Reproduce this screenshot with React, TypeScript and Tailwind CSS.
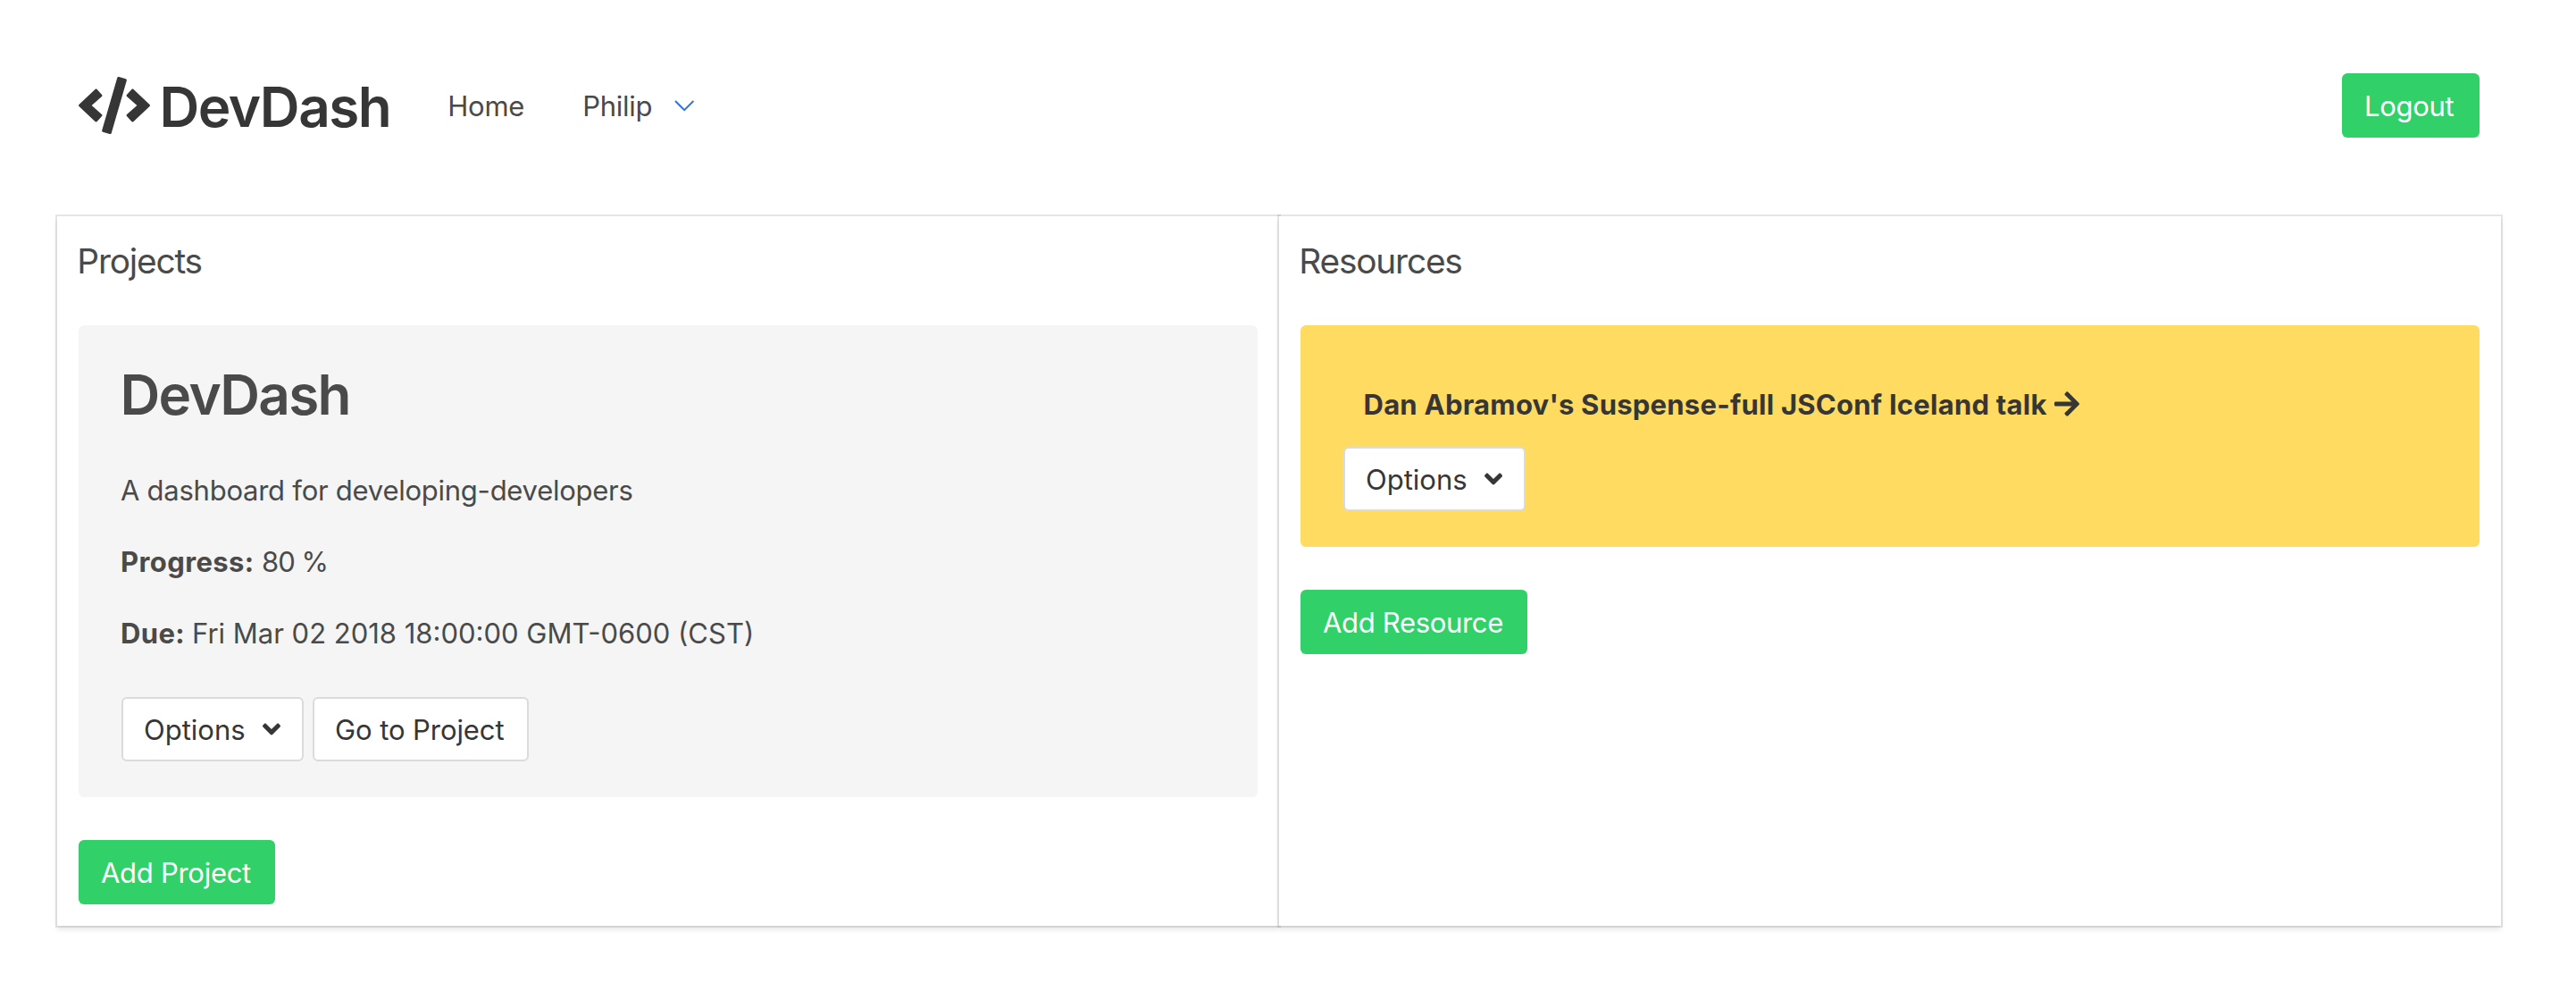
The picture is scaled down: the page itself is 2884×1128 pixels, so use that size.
import type { ReactNode } from "react";
import { FaAngleDown, FaArrowRight, FaCode } from "react-icons/fa";

const primary =
  "flex h-[72px] shrink-0 items-center rounded-md bg-[#32d068] pl-[25px] text-[31px] leading-[48px] whitespace-nowrap text-white";
const plain =
  "flex h-[72px] shrink-0 items-center rounded-md border-2 border-[#dbdbdb] bg-white pl-[23px] text-[31px] leading-[48px] whitespace-nowrap text-[#363636]";

function OptionsButton() {
  return (
    <button className={`${plain} w-[204px]`}>
      <span className="pt-px">Options</span>
      <FaAngleDown className="ml-[19px] h-8 w-5 shrink-0" />
    </button>
  );
}

function Panel({ title, children }: { title: string; children: ReactNode }) {
  return (
    <section className="flex w-[1368px] flex-col items-start px-6 pb-6 shadow-[0_4px_6px_rgba(10,10,10,0.1),0_0_0_2px_rgba(10,10,10,0.1)] bg-white">
      <h2 className="mt-5 -ml-[1.7px] h-[60px] text-[38.8px] leading-[60px] tracking-[-1.18px]">{title}</h2>
      {children}
    </section>
  );
}

export default function App() {
  return (
    <div className="h-[1128px] w-[2884px] overflow-hidden bg-white font-[Inter,sans-serif] text-[#4a4a4a]">
      <nav className="flex h-[236px] items-center pr-[108px] pl-[88px] text-[31px] leading-[48px]">
        <FaCode className="h-16 w-20 shrink-0 text-[#363636]" />
        <a className="ml-[10.5px] pt-[3px] text-[62px] leading-[72px] font-semibold tracking-[-1.5px] text-[#363636]">
          DevDash
        </a>
        <a className="ml-[64px] pt-px tracking-[-0.25px]">Home</a>
        <a className="ml-[65px] flex items-center pt-px tracking-[-0.27px]">
          Philip
          <svg className="ml-[25px] h-[13px] w-[23px]" viewBox="0 0 23 13" fill="none" stroke="#3273dc" strokeWidth="2">
            <path d="M1 1 11.2 11.2 21.4 1" />
          </svg>
        </a>
        <button className={`${primary} ml-auto w-[154px] tracking-[-0.3px]`}>
          <span className="pt-px">Logout</span>
        </button>
      </nav>

      <main className="mt-[6px] ml-16 flex h-[794px] w-[2736px] items-stretch">
        <Panel title="Projects">
          <article className="mt-[42px] h-[528px] w-[1320px] rounded-md bg-[#f5f5f5] px-12 pt-10 text-[31px]">
            <h3 className="-ml-[1.5px] h-[72px] pt-px text-[62px] leading-[74px] font-semibold tracking-[-1.7px]">DevDash</h3>
            <p className="mt-12 -ml-px h-12 pt-px leading-[48px] tracking-[-0.25px]">A dashboard for developing-developers</p>
            <p className="mt-8 -ml-px flex h-12 pt-px leading-[48px]">
              <strong className="w-[158px] font-bold tracking-[0.4px]">Progress:</strong>
              <span className="tracking-[-0.98px]">80 %</span>
            </p>
            <p className="mt-8 -ml-px flex h-12 pt-px leading-[48px]">
              <strong className="w-[80px] font-bold tracking-[0.4px]">Due:</strong>
              <span>Fri Mar 02 2018 18:00:00 GMT-0600 (CST)</span>
            </p>
            <div className="mt-12 flex gap-[10px]">
              <OptionsButton />
              <button className={`${plain} w-[242px] tracking-[-0.08px]`}>
                <span className="pt-px">Go to Project</span>
              </button>
            </div>
          </article>
          <button className={`${primary} mt-12 w-[220px] tracking-[-0.28px]`}>
            <span className="pt-px">Add Project</span>
          </button>
        </Panel>

        <Panel title="Resources">
          <article className="mt-[42px] h-[248px] w-[1320px] rounded-md bg-[#ffdb61] px-12 pt-16 text-[31px]">
            <a className="ml-6 flex h-12 items-center leading-[48px] font-bold tracking-[0.243px] whitespace-nowrap text-[#363636]">
              <span className="w-[773px] -ml-[1.5px] pt-px">Dan Abramov's Suspense-full JSConf Iceland talk</span>
              <FaArrowRight className="h-8 w-7" />
            </a>
            <div className="mt-6">
              <OptionsButton />
            </div>
          </article>
          <button className={`${primary} mt-12 w-[254px] tracking-[-0.33px]`}>
            <span className="pt-px">Add Resource</span>
          </button>
        </Panel>
      </main>
    </div>
  );
}
